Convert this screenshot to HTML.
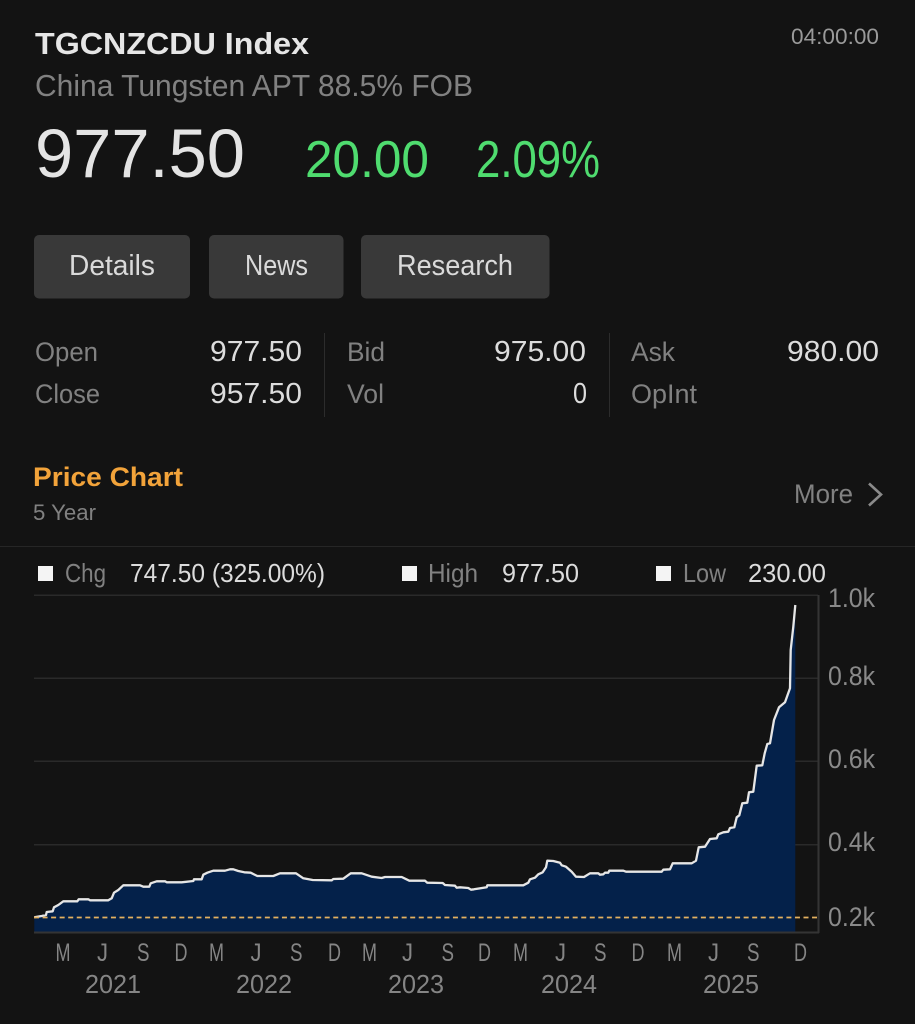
<!DOCTYPE html>
<html><head><meta charset="utf-8"><style>
html,body{margin:0;padding:0;background:#131313;width:915px;height:1024px;overflow:hidden}
svg{display:block;font-family:"Liberation Sans",sans-serif}
.g{fill:#818181}.w{fill:#dcdcdc}.a{fill:#8a8a8a;font-size:26.5px}
.l{font-size:27px}.v{font-size:29px}.b{font-size:28.5px;fill:#dadada}.m{font-size:25px;fill:#858585}.y{font-size:26px;fill:#858585}.c{font-size:26px}
</style></head><body>
<svg width="915" height="1024" viewBox="0 0 915 1024" xmlns="http://www.w3.org/2000/svg">
<rect width="915" height="1024" fill="#131313"/>
<text x="35" y="54" font-size="31" font-weight="bold" fill="#e6e6e6" textLength="274" lengthAdjust="spacingAndGlyphs">TGCNZCDU Index</text>
<text x="35" y="96" font-size="31" class="g" textLength="438" lengthAdjust="spacingAndGlyphs">China Tungsten APT 88.5% FOB</text>
<text x="791" y="44" font-size="22" fill="#9a9a9a" textLength="88" lengthAdjust="spacingAndGlyphs">04:00:00</text>
<text x="35" y="177" font-size="69" fill="#e4e4e4" textLength="210" lengthAdjust="spacingAndGlyphs">977.50</text>
<text x="305" y="177" font-size="52" fill="#4fdc6f" textLength="124" lengthAdjust="spacingAndGlyphs">20.00</text>
<text x="476" y="177" font-size="52" fill="#4fdc6f" textLength="124" lengthAdjust="spacingAndGlyphs">2.09%</text>
<rect x="34" y="235" width="156" height="63.5" rx="5" fill="#393939"/>
<rect x="209" y="235" width="134.500" height="63.5" rx="5" fill="#393939"/>
<rect x="361" y="235" width="188.500" height="63.5" rx="5" fill="#393939"/>
<text x="69" y="275" class="b" textLength="86" lengthAdjust="spacingAndGlyphs">Details</text>
<text x="245" y="275" class="b" textLength="63" lengthAdjust="spacingAndGlyphs">News</text>
<text x="397" y="275" class="b" textLength="116" lengthAdjust="spacingAndGlyphs">Research</text>
<rect x="324" y="333" width="1" height="84" fill="#2c2c2c"/>
<rect x="609" y="333" width="1" height="84" fill="#2c2c2c"/>
<text x="35" y="361" class="l g" textLength="63" lengthAdjust="spacingAndGlyphs">Open</text>
<text x="35" y="403" class="l g" textLength="65" lengthAdjust="spacingAndGlyphs">Close</text>
<text x="347" y="361" class="l g" textLength="38" lengthAdjust="spacingAndGlyphs">Bid</text>
<text x="347" y="403" class="l g" textLength="37" lengthAdjust="spacingAndGlyphs">Vol</text>
<text x="631" y="361" class="l g" textLength="44" lengthAdjust="spacingAndGlyphs">Ask</text>
<text x="631" y="403" class="l g" textLength="66" lengthAdjust="spacingAndGlyphs">OpInt</text>
<text x="210" y="361" class="v w" textLength="92" lengthAdjust="spacingAndGlyphs">977.50</text>
<text x="210" y="403" class="v w" textLength="92" lengthAdjust="spacingAndGlyphs">957.50</text>
<text x="494" y="361" class="v w" textLength="92" lengthAdjust="spacingAndGlyphs">975.00</text>
<text x="573" y="403" class="v w" textLength="14" lengthAdjust="spacingAndGlyphs">0</text>
<text x="787" y="361" class="v w" textLength="92" lengthAdjust="spacingAndGlyphs">980.00</text>
<text x="33" y="486" font-size="27" font-weight="bold" fill="#f2a33a" textLength="150" lengthAdjust="spacingAndGlyphs">Price Chart</text>
<text x="33" y="520" font-size="22" class="g" textLength="63" lengthAdjust="spacingAndGlyphs">5 Year</text>
<text x="794" y="503" class="l g" textLength="59" lengthAdjust="spacingAndGlyphs">More</text>
<path d="M869 483.500L881 494.500L869 505.500" fill="none" stroke="#8a8a8a" stroke-width="2.600"/>
<rect x="0" y="546" width="915" height="1" fill="#262626"/>
<rect x="38" y="566" width="15" height="15" fill="#f4f4f4"/>
<rect x="402" y="566" width="15" height="15" fill="#f4f4f4"/>
<rect x="656" y="566" width="15" height="15" fill="#f4f4f4"/>
<text x="65" y="582" class="c g" textLength="41" lengthAdjust="spacingAndGlyphs">Chg</text>
<text x="130" y="582" class="c w" textLength="195" lengthAdjust="spacingAndGlyphs">747.50 (325.00%)</text>
<text x="428" y="582" class="c g" textLength="50" lengthAdjust="spacingAndGlyphs">High</text>
<text x="502" y="582" class="c w" textLength="77" lengthAdjust="spacingAndGlyphs">977.50</text>
<text x="683" y="582" class="c g" textLength="43" lengthAdjust="spacingAndGlyphs">Low</text>
<text x="748" y="582" class="c w" textLength="78" lengthAdjust="spacingAndGlyphs">230.00</text>
<g fill="#2a2a2a">
<rect x="34" y="594.500" width="784" height="1.500"/>
<rect x="34" y="677.500" width="784" height="1.500"/>
<rect x="34" y="760.500" width="784" height="1.500"/>
<rect x="34" y="844" width="784" height="1.500"/>
</g>
<polygon fill="#04214a" points="34.3,932 34.3,917.3 41.7,916 46,915 46.7,912 52.7,911.3 54,907.3 58.3,905 63.3,901.3 77.3,901.3 78.7,899.3 88.3,899.3 90,900.3 108.3,900.3 111.7,898.3 114,892.7 118.3,890 123.3,885.3 140,885.3 143.3,886.7 149.3,886.7 150.7,883.3 156.7,881.3 165,881.3 166.7,882.3 181.7,882.3 193.3,881 194,879.3 201.7,879.3 203.3,874.7 207.3,872.7 213.3,870.7 225,870.7 230,869.3 233.3,869.3 238.3,871 244.3,872.3 250.7,872.7 257.3,876 273.3,876 280,873.3 296,873.3 303.3,878.3 312.7,880 331.7,880.3 333.3,879 343.3,878.7 350.7,873.3 361.7,873.3 371.7,876.7 381.7,878 385,877 401.7,877 409.3,880.7 425,880.7 427.3,882.7 442.7,883 445,885 455,885.7 456.7,887.7 460,887.3 468.3,888 471,889.7 474,889.3 486.7,887.3 487.3,885.3 523.3,885.3 528.3,882.7 530,879.3 535,877.7 538.3,874.3 542.7,872.3 546,867.3 547.3,860.7 553.3,861 560,862.7 561.7,865.3 566,866.7 571.7,871.7 576,876.7 584,877 590,873.3 598.3,873.3 600,874.7 603.3,874.3 605,872.7 608.3,872.7 609.3,870.7 623.3,870.7 626,871.7 661.7,871.7 663.3,869.7 670,869.3 672.7,863.3 691.7,863.3 696,860.7 698.7,847.3 705,846.7 710,839 716.7,838.3 718.3,834.3 723.3,832.3 728.3,831.7 730,828 734.3,827.3 736.7,817.3 739.3,815.3 742.3,803.3 747.3,802.7 749,792.3 753.3,791.7 756.7,765.7 762.3,765.3 764.7,753.3 767.3,744 770,743.3 774,720 779,707.3 785,702.3 790,688.3 790.7,650 793.3,626.7 795.3,605 795.3,932"/>
<polyline fill="none" stroke="#e6e6e6" stroke-width="2.300" stroke-linejoin="round" points="34.3,917.3 41.7,916 46,915 46.7,912 52.7,911.3 54,907.3 58.3,905 63.3,901.3 77.3,901.3 78.7,899.3 88.3,899.3 90,900.3 108.3,900.3 111.7,898.3 114,892.7 118.3,890 123.3,885.3 140,885.3 143.3,886.7 149.3,886.7 150.7,883.3 156.7,881.3 165,881.3 166.7,882.3 181.7,882.3 193.3,881 194,879.3 201.7,879.3 203.3,874.7 207.3,872.7 213.3,870.7 225,870.7 230,869.3 233.3,869.3 238.3,871 244.3,872.3 250.7,872.7 257.3,876 273.3,876 280,873.3 296,873.3 303.3,878.3 312.7,880 331.7,880.3 333.3,879 343.3,878.7 350.7,873.3 361.7,873.3 371.7,876.7 381.7,878 385,877 401.7,877 409.3,880.7 425,880.7 427.3,882.7 442.7,883 445,885 455,885.7 456.7,887.7 460,887.3 468.3,888 471,889.7 474,889.3 486.7,887.3 487.3,885.3 523.3,885.3 528.3,882.7 530,879.3 535,877.7 538.3,874.3 542.7,872.3 546,867.3 547.3,860.7 553.3,861 560,862.7 561.7,865.3 566,866.7 571.7,871.7 576,876.7 584,877 590,873.3 598.3,873.3 600,874.7 603.3,874.3 605,872.7 608.3,872.7 609.3,870.7 623.3,870.7 626,871.7 661.7,871.7 663.3,869.7 670,869.3 672.7,863.3 691.7,863.3 696,860.7 698.7,847.3 705,846.7 710,839 716.7,838.3 718.3,834.3 723.3,832.3 728.3,831.7 730,828 734.3,827.3 736.7,817.3 739.3,815.3 742.3,803.3 747.3,802.7 749,792.3 753.3,791.7 756.7,765.7 762.3,765.3 764.7,753.3 767.3,744 770,743.3 774,720 779,707.3 785,702.3 790,688.3 790.7,650 793.3,626.7 795.3,605"/>
<line x1="34" y1="917.500" x2="817" y2="917.500" stroke="#e4b160" stroke-width="1.800" stroke-dasharray="5 3.550"/>
<rect x="34" y="931.500" width="785" height="2" fill="#343434"/>
<rect x="817.500" y="595" width="2" height="338" fill="#343434"/>
<text x="828" y="607" class="a" textLength="47" lengthAdjust="spacingAndGlyphs">1.0k</text>
<text x="828" y="685" class="a" textLength="47" lengthAdjust="spacingAndGlyphs">0.8k</text>
<text x="828" y="768" class="a" textLength="47" lengthAdjust="spacingAndGlyphs">0.6k</text>
<text x="828" y="851" class="a" textLength="47" lengthAdjust="spacingAndGlyphs">0.4k</text>
<text x="828" y="926" class="a" textLength="47" lengthAdjust="spacingAndGlyphs">0.2k</text>
<text x="55.500" y="961" class="m" textLength="15" lengthAdjust="spacingAndGlyphs">M</text>
<text x="97" y="961" class="m" textLength="11" lengthAdjust="spacingAndGlyphs">J</text>
<text x="137" y="961" class="m" textLength="12.500" lengthAdjust="spacingAndGlyphs">S</text>
<text x="174.500" y="961" class="m" textLength="13" lengthAdjust="spacingAndGlyphs">D</text>
<text x="209" y="961" class="m" textLength="15" lengthAdjust="spacingAndGlyphs">M</text>
<text x="250.500" y="961" class="m" textLength="11" lengthAdjust="spacingAndGlyphs">J</text>
<text x="290" y="961" class="m" textLength="12.500" lengthAdjust="spacingAndGlyphs">S</text>
<text x="328" y="961" class="m" textLength="13" lengthAdjust="spacingAndGlyphs">D</text>
<text x="362" y="961" class="m" textLength="15" lengthAdjust="spacingAndGlyphs">M</text>
<text x="402" y="961" class="m" textLength="11" lengthAdjust="spacingAndGlyphs">J</text>
<text x="441.500" y="961" class="m" textLength="12.500" lengthAdjust="spacingAndGlyphs">S</text>
<text x="478" y="961" class="m" textLength="13" lengthAdjust="spacingAndGlyphs">D</text>
<text x="513" y="961" class="m" textLength="15" lengthAdjust="spacingAndGlyphs">M</text>
<text x="555" y="961" class="m" textLength="11" lengthAdjust="spacingAndGlyphs">J</text>
<text x="594" y="961" class="m" textLength="12.500" lengthAdjust="spacingAndGlyphs">S</text>
<text x="631.500" y="961" class="m" textLength="13" lengthAdjust="spacingAndGlyphs">D</text>
<text x="667" y="961" class="m" textLength="15" lengthAdjust="spacingAndGlyphs">M</text>
<text x="708" y="961" class="m" textLength="11" lengthAdjust="spacingAndGlyphs">J</text>
<text x="747" y="961" class="m" textLength="12.500" lengthAdjust="spacingAndGlyphs">S</text>
<text x="794" y="961" class="m" textLength="13" lengthAdjust="spacingAndGlyphs">D</text>
<text x="85" y="993" class="y" textLength="56" lengthAdjust="spacingAndGlyphs">2021</text>
<text x="236" y="993" class="y" textLength="56" lengthAdjust="spacingAndGlyphs">2022</text>
<text x="388" y="993" class="y" textLength="56" lengthAdjust="spacingAndGlyphs">2023</text>
<text x="541" y="993" class="y" textLength="56" lengthAdjust="spacingAndGlyphs">2024</text>
<text x="703" y="993" class="y" textLength="56" lengthAdjust="spacingAndGlyphs">2025</text>
</svg>
</body></html>
